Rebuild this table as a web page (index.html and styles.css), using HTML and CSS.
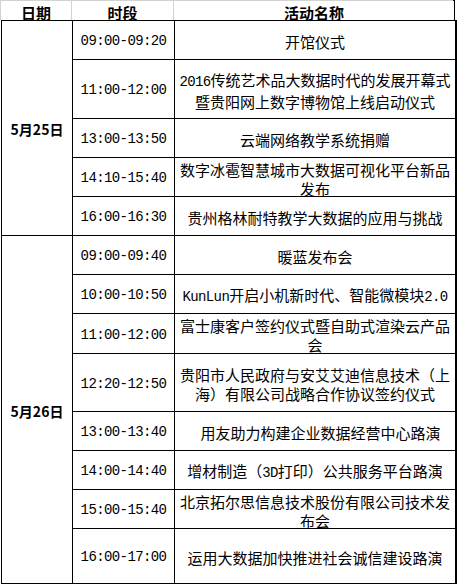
FILE: index.html
```html
<!DOCTYPE html>
<html lang="zh-CN">
<head>
<meta charset="utf-8">
<title>活动日程</title>
<link rel="stylesheet" href="styles.css">
</head>
<body>
<div class="sheet">
  <div class="head">
    <div class="hcell"><span>日期</span></div>
    <div class="hcell"><span>时段</span></div>
    <div class="hcell"><span>活动名称</span></div>
  </div>
  <div class="body">
    <div class="date d1"><span>5月25日</span></div>
    <div class="time"><span>09:00-09:20</span></div>
    <div class="act"><span>开馆仪式</span></div>
    <div class="time"><span>11:00-12:00</span></div>
    <div class="act"><span><span class="lat">2016</span>传统艺术品大数据时代的发展开幕式<br>暨贵阳网上数字博物馆上线启动仪式</span></div>
    <div class="time"><span>13:00-13:50</span></div>
    <div class="act"><span>云端网络教学系统捐赠</span></div>
    <div class="time"><span>14:10-15:40</span></div>
    <div class="act"><span>数字冰雹智慧城市大数据可视化平台新品<br>发布</span></div>
    <div class="time"><span>16:00-16:30</span></div>
    <div class="act"><span>贵州格林耐特教学大数据的应用与挑战</span></div>

    <div class="date d2"><span>5月26日</span></div>
    <div class="time"><span>09:00-09:40</span></div>
    <div class="act"><span>暖蓝发布会</span></div>
    <div class="time"><span>10:00-10:50</span></div>
    <div class="act"><span><span class="lat">KunLun</span>开启小机新时代、智能微模块<span class="lat">2.0</span></span></div>
    <div class="time"><span>11:00-12:00</span></div>
    <div class="act"><span>富士康客户签约仪式暨自助式渲染云产品<br>会</span></div>
    <div class="time"><span>12:20-12:50</span></div>
    <div class="act"><span>贵阳市人民政府与安艾艾迪信息技术（上<br>海）有限公司战略合作协议签约仪式</span></div>
    <div class="time"><span>13:00-13:40</span></div>
    <div class="act nudge"><span>用友助力构建企业数据经营中心路演</span></div>
    <div class="time"><span>14:00-14:40</span></div>
    <div class="act"><span>增材制造（<span class="lat">3D</span>打印）公共服务平台路演</span></div>
    <div class="time"><span>15:00-15:40</span></div>
    <div class="act"><span>北京拓尔思信息技术股份有限公司技术发<br>布会</span></div>
    <div class="time"><span>16:00-17:00</span></div>
    <div class="act"><span>运用大数据加快推进社会诚信建设路演</span></div>
  </div>
</div>
</body>
</html>
```

FILE: styles.css
```css
html, body {
  margin: 0;
  padding: 0;
  background: #ffffff;
}

body {
  font-family: "Noto Sans CJK SC", "Noto Sans", sans-serif;
  color: #000000;
}

.sheet {
  width: 456px;
  margin-left: 1px;
}

.head {
  display: grid;
  grid-template-columns: 70px 101px 280px;
  column-gap: 1px;
  background: #d2d2d2;
  padding: 1px 0 0 1px;
  border-right: 2px solid #000;
  margin-left: -1px;
  width: 455px;
  box-sizing: border-box;
}

.hcell {
  background: #ffffff;
  height: 19px;
  box-sizing: border-box;
  padding-top: 3px;
  display: flex;
  align-items: center;
  justify-content: center;
  font-size: 15px;
  line-height: 19px;
  font-weight: 700;
}

.body {
  display: grid;
  grid-template-columns: 70px 101px 280px;
  grid-template-rows: 38px 58px 38px 38px 38px 38px 38px 39px 57px 38px 38px 38px 54px;
  gap: 1px;
  background: #000000;
  padding: 1px 2px 1px 1px;
  width: 456px;
  box-sizing: border-box;
}

.date,
.time,
.act {
  background: #ffffff;
  box-sizing: border-box;
  padding-top: 3px;
  display: flex;
  align-items: center;
  justify-content: center;
  text-align: center;
  overflow: visible;
}

.date {
  grid-column: 1;
  font-size: 14px;
  line-height: 19px;
  font-weight: 700;
}

.d1 {
  grid-row: 1 / span 5;
}

.d2 {
  grid-row: 6 / span 8;
}

.time {
  grid-column: 2;
  font-family: "Liberation Mono", "DejaVu Sans Mono", monospace;
  font-size: 14px;
  letter-spacing: -0.6px;
  line-height: 19px;
}

.act {
  grid-column: 3;
  font-size: 15px;
  line-height: 19px;
  white-space: nowrap;
}

.act.nudge {
  padding-left: 11px;
}

.lat {
  font-family: "Liberation Mono", "DejaVu Sans Mono", monospace;
  font-size: 14px;
  letter-spacing: -0.6px;
}
```
